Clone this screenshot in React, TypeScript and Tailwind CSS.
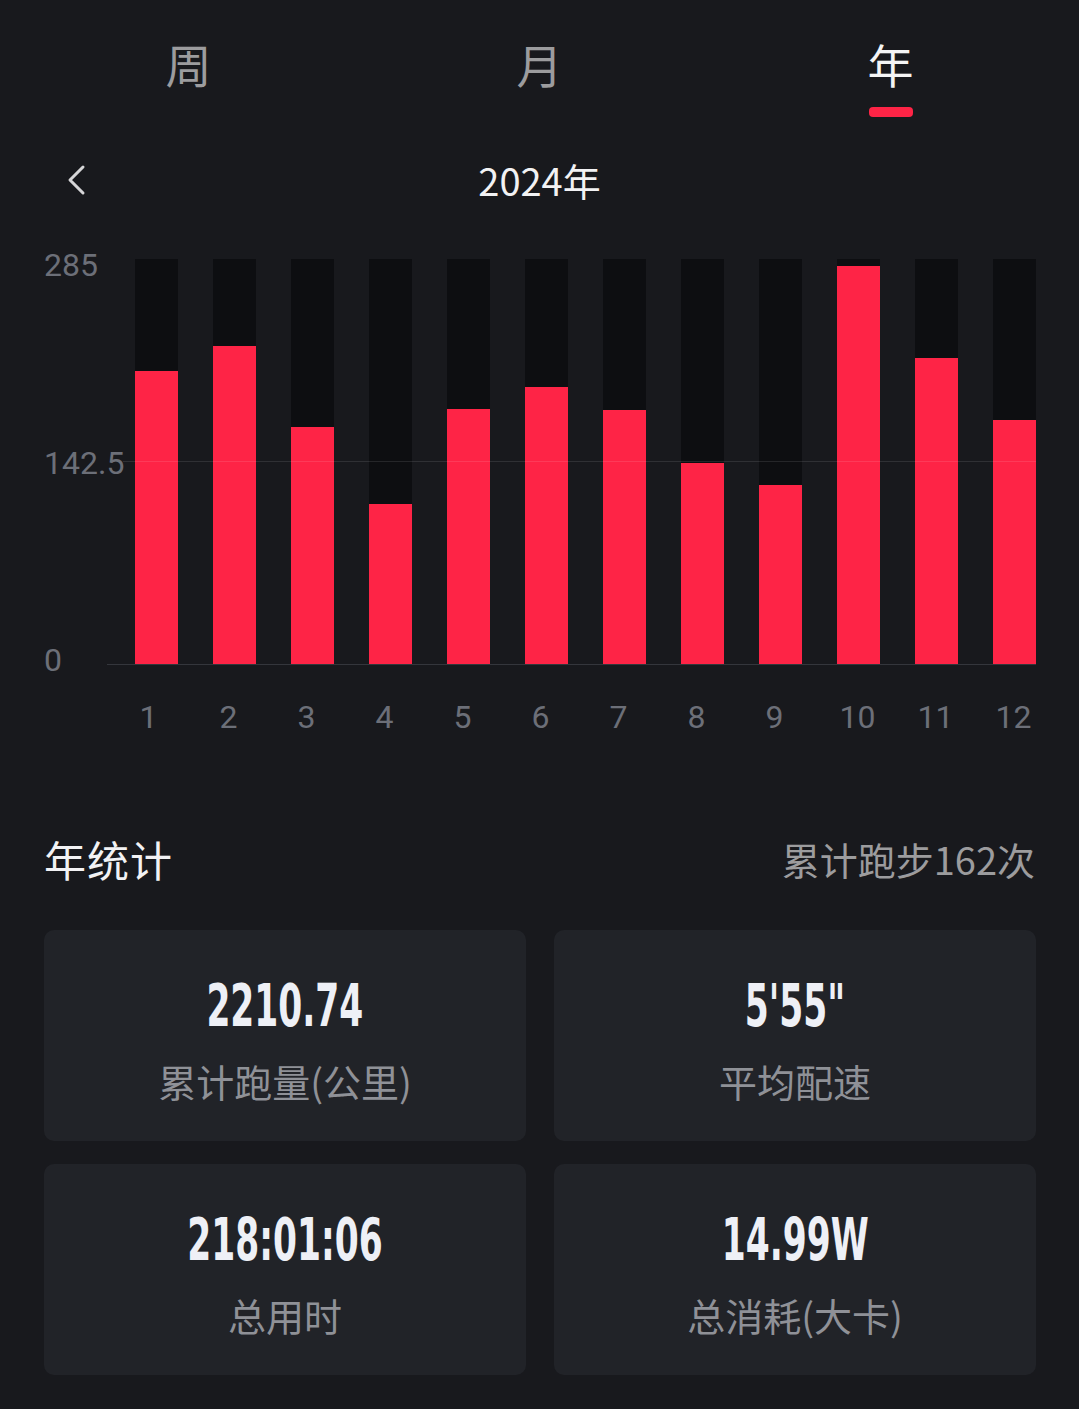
import React from "react";

const cjk = { fontFamily: '"Noto Sans CJK SC", "Noto Sans", sans-serif' };
const num = { fontFamily: 'Roboto, "Noto Sans", sans-serif' };
const cond = { fontFamily: '"Liberation Sans Narrow", "DejaVu Sans Condensed", "Liberation Sans", sans-serif' };

const values = [293, 318, 237, 160, 255, 277, 254, 201, 179, 398, 306, 244];

const stats = [
  { v: "2210.74", l: "累计跑量(公里)" },
  { v: "5'55\"", l: "平均配速" },
  { v: "218:01:06", l: "总用时" },
  { v: "14.99W", l: "总消耗(大卡)" },
];

export default function App() {
  return (
    <div className="w-full min-h-[1409px] bg-[#18191d] overflow-hidden" style={cjk}>
      {/* Tabs */}
      <div className="grid grid-cols-3 px-[13px] pt-[40px]">
        {["周", "月", "年"].map((t, i) => (
          <div key={t} className="flex flex-col items-center">
            <span className={`text-[46px] leading-none ${i === 2 ? "text-[#f4f4f5]" : "text-[#9c9c9e]"}`}>{t}</span>
            <div className={`mt-[21px] h-[10px] w-[44px] rounded-[4px] ${i === 2 ? "bg-[#fe2446]" : "bg-transparent"}`} />
          </div>
        ))}
      </div>

      {/* Year nav */}
      <div className="grid grid-cols-[1fr_auto_1fr] items-center mt-[43px] h-[40px]">
        <div className="pl-[64px] flex items-center">
          <svg width="24" height="32" viewBox="0 0 24 32" fill="none">
            <path d="M19 3 L6 16 L19 29" stroke="#d6d6d8" strokeWidth="3" strokeLinecap="round" strokeLinejoin="round" />
          </svg>
        </div>
        <span className="text-[38px] leading-none text-[#f2f2f4]">2024年</span>
        <div />
      </div>

      {/* Chart */}
      <div className="flex mt-[49px] pr-[43px]" style={num}>
        <div className="w-[107px] pl-[44px] h-[427px] flex flex-col justify-between text-[32px] leading-none text-[#6c6f78]">
          <span>285</span>
          <span className="whitespace-nowrap">142.5</span>
          <span>0</span>
        </div>
        <div className="flex-1 flex flex-col">
          <div className="relative mt-[10px] h-[406px] border-b border-[#34363c]">
            <div className="flex gap-[35px] pl-[28px] h-full">
              {values.map((v, i) => (
                <div key={i} className="w-[43px] h-full bg-[#0d0e11] flex flex-col justify-end">
                  <div className="w-full bg-[#fe2446]" style={{ height: `${v}px` }} />
                </div>
              ))}
            </div>
            <div className="absolute left-[16px] right-0 top-[202px] h-px bg-white/10" />
          </div>
          <div className="flex gap-[35px] pl-[28px] mt-[36px]">
            {values.map((_, i) => (
              <span key={i} className="w-[43px] flex justify-center text-[32px] leading-none text-[#6c6f78]">
                <span className={i === 0 ? "-ml-[16px]" : i < 9 ? "-ml-[12px]" : "-ml-[2px]"}>{i + 1}</span>
              </span>
            ))}
          </div>
        </div>
      </div>

      {/* Year stats header */}
      <div className="flex items-center justify-between px-[44px] mt-[104px] h-[44px]">
        <span className="text-[42px] leading-none text-[#f2f2f4] tracking-[1px]">年统计</span>
        <span className="text-[38px] leading-none text-[#9c9c9e]">累计跑步162次</span>
      </div>

      {/* Cards */}
      <div className="grid grid-cols-2 gap-x-[28px] gap-y-[23px] pl-[44px] pr-[43px] mt-[49px]">
        {stats.map((s) => (
          <div key={s.l} className="h-[211px] rounded-[10px] bg-[#212328] flex flex-col items-center pt-[47px]">
            <span className="text-[58px] leading-none font-bold text-[#eef0f6] scale-x-[0.66] whitespace-nowrap" style={cond}>
              {s.v}
            </span>
            <span className="mt-[27px] text-[38px] leading-none text-[#8f9197]">{s.l}</span>
          </div>
        ))}
      </div>
    </div>
  );
}
